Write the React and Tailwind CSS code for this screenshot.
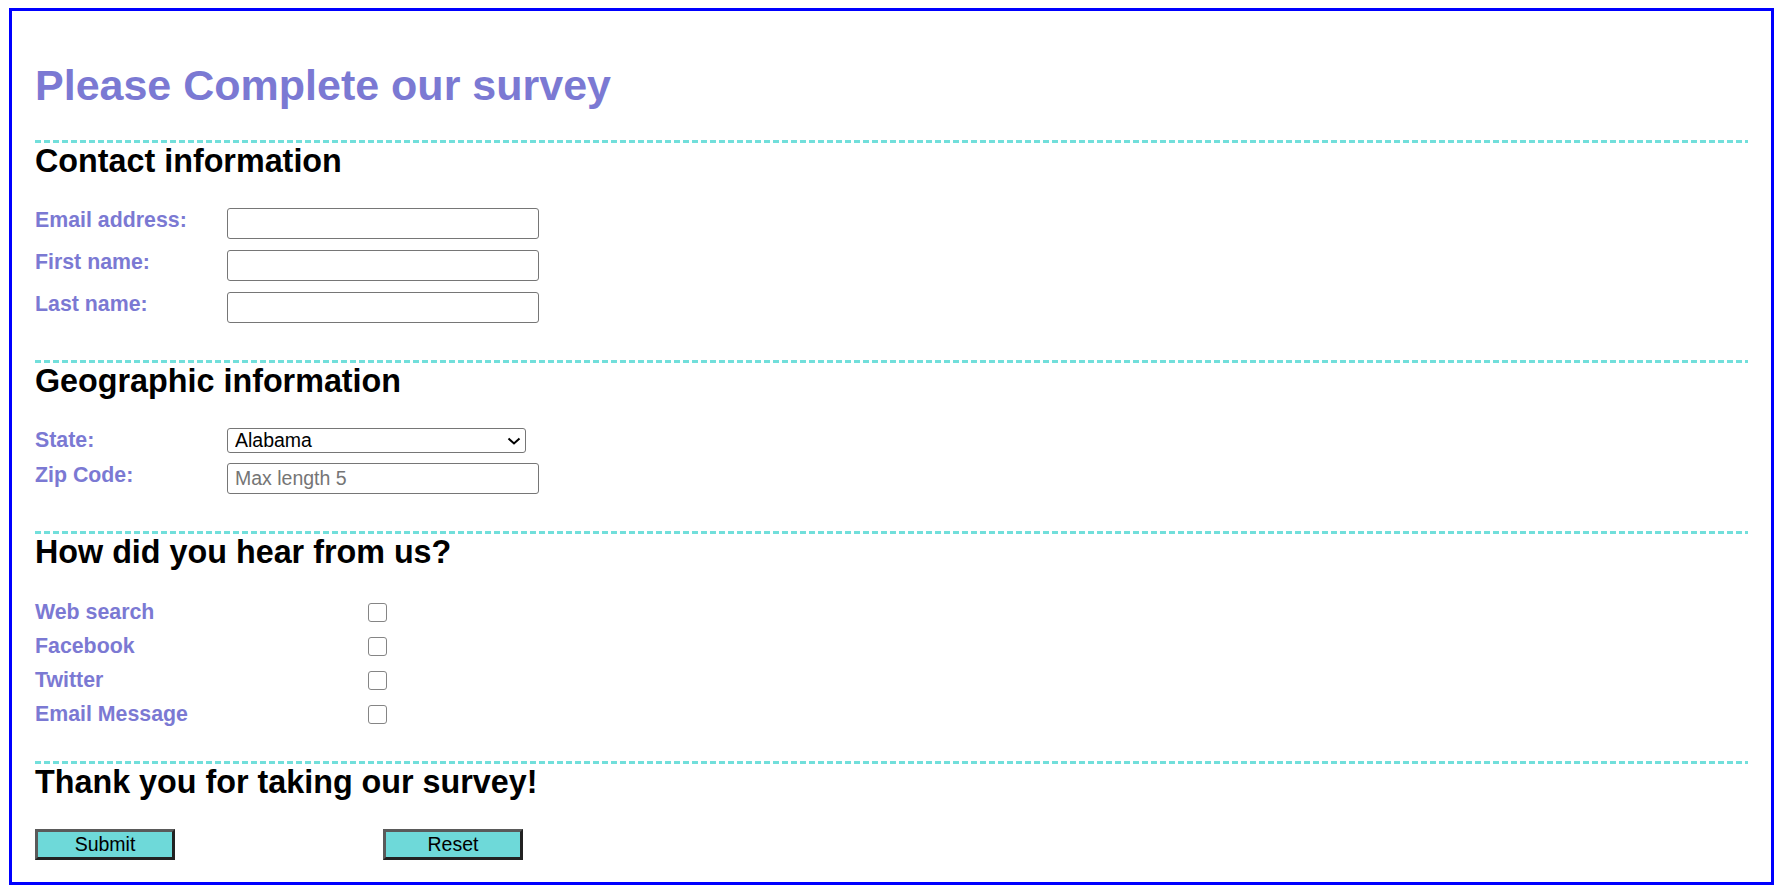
import React from 'react'

const labelCls = "text-[21.33px] leading-[24.5px] font-bold text-[#7b79d3]"
const inputCls = "w-[312px] h-[31px] border border-[#767676] rounded-[3px] px-[7px] text-[19.5px] text-black bg-white outline-none placeholder:text-[#757575]"
const btnCls = "w-[140px] h-[31px] bg-[#6ed9d9] border-[3px] border-[#5a5a5a] border-r-[#222] border-b-[#222] text-[19.5px] leading-none text-black"

function Divider({ className }) {
    return (
        <div
            className={`h-[3px] w-full bg-[repeating-linear-gradient(90deg,#72dfdb_0px,#72dfdb_6px,transparent_6px,transparent_9px)] ${className}`}
        />
    )
}

function Heading({ children }) {
    return (
        <h2 className="text-[32.3px] leading-[37px] font-bold text-black">{children}</h2>
    )
}

function FieldRow({ label, children }) {
    return (
        <div className="flex items-start">
            <label className={`w-[192px] shrink-0 ${labelCls}`}>{label}</label>
            {children}
        </div>
    )
}

function CheckRow({ label }) {
    return (
        <div className="flex items-start h-[24.5px]">
            <span className={`w-[333px] shrink-0 ${labelCls}`}>{label}</span>
            <input
                type="checkbox"
                className="appearance-none mt-[3.5px] w-[19px] h-[19px] border-[1.5px] border-[#858585] rounded-[3px] bg-white"
            />
        </div>
    )
}

export default function App() {
    const states = ['Alabama', 'Alaska', 'Arizona', 'Arkansas', 'California', 'Colorado']

    return (
        <div className="bg-white min-h-[893px] pt-[8px] pl-[9px] font-['Liberation_Sans',Arial,sans-serif]">
            <form className="w-[1765px] h-[877px] border-[3px] border-[#0000ff] px-[23px] pt-[50px]">
                <h1 className="text-[43px] leading-[49px] font-bold text-[#7b79d3]">
                    Please Complete our survey
                </h1>

                <Divider className="mt-[29.5px]" />
                <Heading>Contact information</Heading>
                <div className="mt-[28px] flex flex-col gap-[11px]">
                    <FieldRow label="Email address:">
                        <input type="email" className={inputCls} />
                    </FieldRow>
                    <FieldRow label="First name:">
                        <input type="text" className={inputCls} />
                    </FieldRow>
                    <FieldRow label="Last name:">
                        <input type="text" className={inputCls} />
                    </FieldRow>
                </div>

                <Divider className="mt-[37px]" />
                <Heading>Geographic information</Heading>
                <div className="mt-[28px] flex flex-col gap-[10.5px]">
                    <FieldRow label="State:">
                        <div className="relative w-[299px] h-[25px]">
                            <select className="appearance-none w-full h-full border border-[#767676] rounded-[3px] pl-[7px] text-[19.5px] leading-[23px] text-black bg-white outline-none">
                                {states.map((s) => (
                                    <option key={s}>{s}</option>
                                ))}
                            </select>
                            <svg
                                className="absolute right-[5px] top-[9px] pointer-events-none"
                                width="14"
                                height="8"
                                viewBox="0 0 14 8"
                                fill="none"
                            >
                                <path d="M1.5 1.5 L7 6.5 L12.5 1.5" stroke="#000" strokeWidth="2" />
                            </svg>
                        </div>
                    </FieldRow>
                    <FieldRow label="Zip Code:">
                        <input type="text" maxLength={5} placeholder="Max length 5" className={inputCls} />
                    </FieldRow>
                </div>

                <Divider className="mt-[36.5px]" />
                <Heading>How did you hear from us?</Heading>
                <div className="mt-[29px] flex flex-col gap-[9.5px]">
                    <CheckRow label="Web search" />
                    <CheckRow label="Facebook" />
                    <CheckRow label="Twitter" />
                    <CheckRow label="Email Message" />
                </div>

                <Divider className="mt-[35px]" />
                <Heading>Thank you for taking our survey!</Heading>
                <div className="mt-[28px] flex gap-[208px]">
                    <button type="submit" className={btnCls}>
                        Submit
                    </button>
                    <button type="reset" className={btnCls}>
                        Reset
                    </button>
                </div>
            </form>
        </div>
    )
}
